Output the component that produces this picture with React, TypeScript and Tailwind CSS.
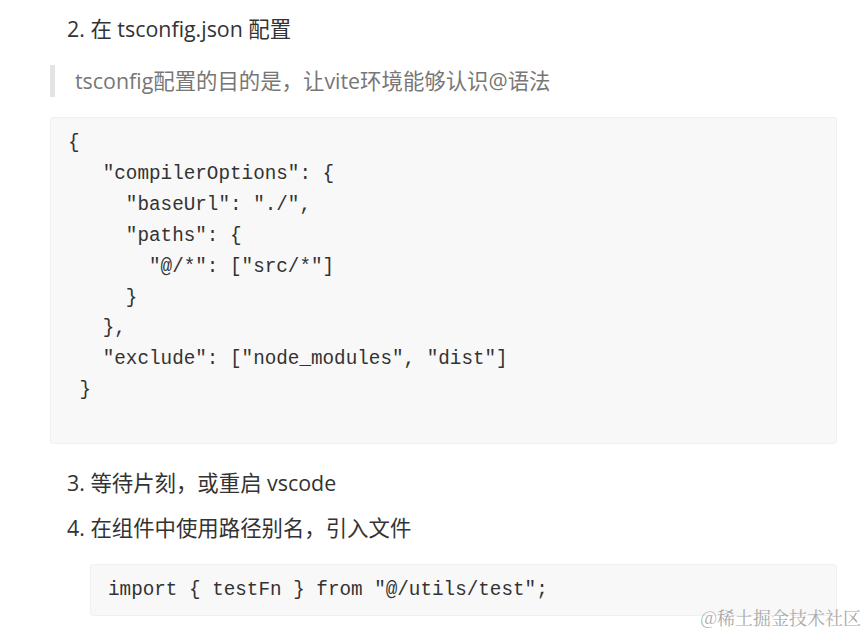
export default function App() {
  const code = [
    '{',
    '   "compilerOptions": {',
    '     "baseUrl": "./",',
    '     "paths": {',
    '       "@/*": ["src/*"]',
    '     }',
    '   },',
    '   "exclude": ["node_modules", "dist"]',
    ' }',
  ]

  return (
    <div className="relative w-[865px] h-[636px] overflow-hidden bg-white font-['Open_Sans','Noto_Sans_CJK_SC',sans-serif] text-[#333]">
      <div className="pl-[50px] pr-[28px]">
        <p className="pl-[17px] pt-[14px] text-[21.4px] leading-[30px]">2. 在 tsconfig.json 配置</p>

        <div className="mt-[21px] flex h-[32px] items-center border-l-[5px] border-[#e3e3e3] pl-[20px] text-[21.4px] text-[#777]">
          tsconfig配置的目的是，让vite环境能够认识@语法
        </div>

        <pre className="mt-[20px] h-[327px] rounded-[3px] border border-[#f0f0f0] bg-[#f8f8f8] pl-[17px] pt-[10px] font-['Liberation_Mono',monospace] text-[19.3px] leading-[30.9px] text-[#333]">
          {code.join('\n')}
        </pre>

        <p className="mt-[24px] pl-[17px] text-[21.4px] leading-[30px]">3. 等待片刻，或重启 vscode</p>
        <p className="mt-[15px] pl-[17px] text-[21.4px] leading-[30px]">4. 在组件中使用路径别名，引入文件</p>

        <pre className="ml-[40px] mt-[21px] flex h-[52px] items-center rounded-[3px] border border-[#f0f0f0] bg-[#f8f8f8] pl-[17px] font-['Liberation_Mono',monospace] text-[19.3px] text-[#333]">
          import {'{'} testFn {'}'} from "@/utils/test";
        </pre>
      </div>

      <div className="absolute right-[4px] top-[604px] font-['Noto_Serif_CJK_SC','Liberation_Serif',serif] text-[18px] text-[#aaa]">
        @稀土掘金技术社区
      </div>
    </div>
  )
}
